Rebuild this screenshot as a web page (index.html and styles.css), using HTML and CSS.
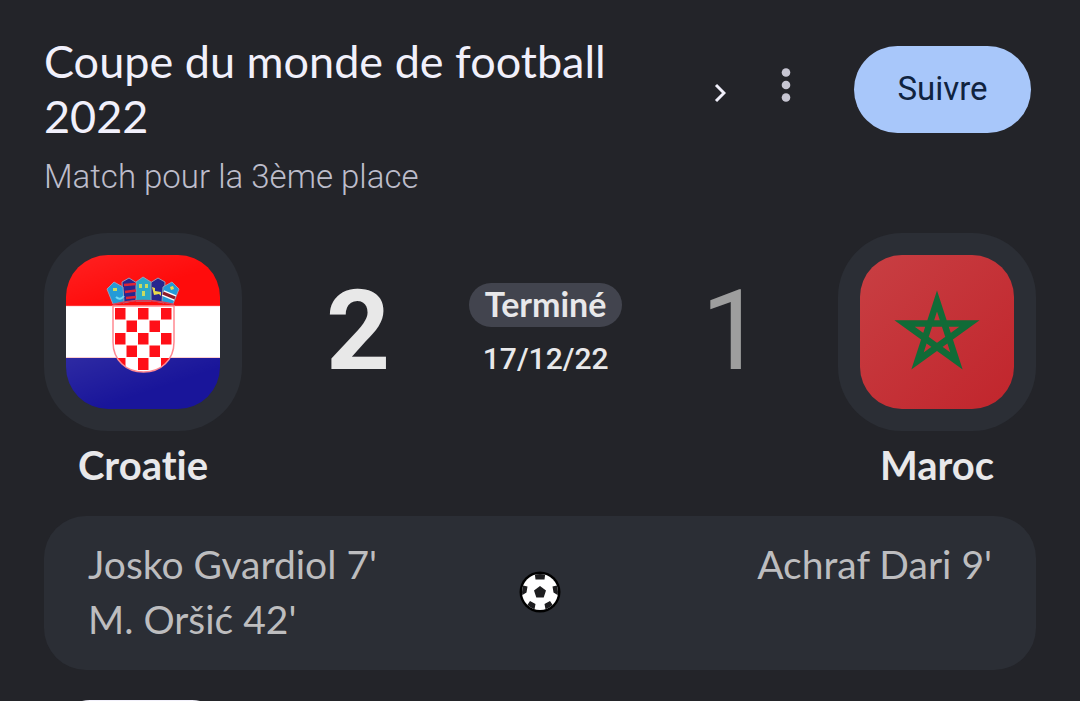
FILE: index.html
```html
<!DOCTYPE html>
<html lang="fr">
<head>
<meta charset="utf-8">
<meta name="viewport" content="width=device-width, initial-scale=1">
<title>Croatie – Maroc</title>
<link rel="stylesheet" href="styles.css">
</head>
<body>
<main class="match">
  <header class="header">
    <a class="competition" href="#">
      <span class="heading">
        <span class="title">Coupe du monde de football 2022</span>
        <span class="subtitle">Match pour la 3ème place</span>
      </span>
      <svg class="chevron" viewBox="0 0 12 20" aria-hidden="true"><path d="M2 2l8 8-8 8" fill="none" stroke="#f1f0fb" stroke-width="3"/></svg>
    </a>
    <button class="more" type="button" aria-label="Plus d'options">
      <svg class="dots" viewBox="0 0 10 34" aria-hidden="true"><g fill="#c7c6d2"><circle cx="5" cy="4.500" r="4.300"/><circle cx="5" cy="17" r="4.300"/><circle cx="5" cy="29.500" r="4.300"/></g></svg>
    </button>
    <button class="follow" type="button">Suivre</button>
  </header>

  <section class="scoreboard">
    <div class="team">
      <div class="badge">
        <svg class="flag" viewBox="0 0 154 154" role="img" aria-label="Drapeau de la Croatie">
          <defs>
            <linearGradient id="shine" x1="0" y1="0" x2="1" y2="1"><stop offset="0" stop-color="#fff" stop-opacity=".09"/><stop offset=".6" stop-color="#fff" stop-opacity="0"/></linearGradient>
          </defs>
          <rect width="154" height="52" fill="#ff0c0c"/>
          <rect y="51" width="154" height="52" fill="#fff"/>
          <rect y="103" width="154" height="51" fill="#19159a"/>
          <rect width="154" height="51" fill="url(#shine)"/>
          <rect y="103" width="154" height="51" fill="url(#shine)"/>
          <path d="M0 51h154M0 102.500h154" stroke="#ff9ba0" stroke-opacity=".5"/>
          <clipPath id="shield"><path d="M47 51h61v36c0 18-13 30-30.500 30S47 105 47 87z"/></clipPath>
          <g clip-path="url(#shield)">
            <rect x="47" y="51" width="61" height="66" fill="#fff"/>
            <path d="M49 53h10.500v11.500H49zM72 53h10.500v11.500H72zM95 53h10.500v11.500H95zM60.500 65.500H71V77H60.500zM83.500 65.500H94V77H83.500zM49 78h10.500v11.500H49zM72 78h10.500v11.500H72zM95 78h10.500v11.500H95zM60.500 90.500H71V102H60.500zM83.500 90.500H94V102H83.500zM49 103h10.500v12H49zM72 103h10.500v12H72zM95 103h10.500v12H95z" fill="#ff1018"/>
          </g>
          <path d="M47 51h61v36c0 18-13 30-30.500 30S47 105 47 87z" fill="none" stroke="#ff8890" stroke-width="1.500"/>
          <g stroke="#9a9bb5" stroke-width="1" stroke-linejoin="round">
            <path d="M56 27l7-4 8 5v17l-14 3z" fill="#28268e"/>
            <path d="M99 27l-7-4-8 5v17l14 3z" fill="#28268e"/>
            <path d="M41 34l7-7 9 5 1 15-11 2z" fill="#249bd7"/>
            <path d="M113 34l-7-7-9 5-1 15 11 2z" fill="#249bd7"/>
            <path d="M70 27l7-5 8 5v19H70z" fill="#2ba8c8"/>
          </g>
          <path d="M58 30l12-1M59 37l11-1.500M60 43l10-1" stroke="#df2536" stroke-width="2.500"/>
          <path d="M73 29h3v4h-3zM79 29h3v4h-3zM76 36h3v5h-3zM47 33h4v3h-4z" fill="#c6db61"/>
          <path d="M104 32l3-1 1 3-3 1zM86 32l3 1v3l6 1v4l-2-2-5 1-1-4z" fill="#eadb4b"/>
          <path d="M50 42q4 4 8-1" fill="none" stroke="#72d9f4" stroke-width="2"/>
          <path d="M97 38l12 5" stroke="#fff" stroke-width="6"/><path d="M97 38l12 5" stroke="#8e1d2b" stroke-width="3"/>
          <path d="M47 49.500q30-8 61 0" fill="none" stroke="#d83b55" stroke-width="1.500"/>
        </svg>
      </div>
      <h2 class="name">Croatie</h2>
    </div>

    <div class="result">
      <span class="score winner">2</span>
      <div class="status"><span class="state">Terminé</span><time class="date" datetime="2022-12-17">17/12/22</time></div>
      <span class="score">1</span>
    </div>

    <div class="team">
      <div class="badge">
        <svg class="flag" viewBox="0 0 154 154" role="img" aria-label="Drapeau du Maroc">
          <defs><linearGradient id="red" x1="0" y1="0" x2="1" y2="1"><stop offset="0" stop-color="#c83f43"/><stop offset="1" stop-color="#c1252c"/></linearGradient></defs>
          <rect width="154" height="154" fill="url(#red)"/>
          <path d="M77 46L96.500 106 44.500 68.500h65L57.500 106z" fill="none" stroke="#116b37" stroke-width="6.500" stroke-miterlimit="10"/>
        </svg>
      </div>
      <h2 class="name">Maroc</h2>
    </div>
  </section>

  <section class="goals" aria-label="Buts">
    <ul class="scorers"><li>Josko Gvardiol 7'</li><li>M. Oršić 42'</li></ul>
    <svg class="ball" viewBox="0 0 42 42" aria-hidden="true">
      <defs><clipPath id="disc"><circle cx="21" cy="21" r="18"/></clipPath></defs>
      <circle cx="21" cy="21" r="20.500" fill="#000"/>
      <circle cx="21" cy="21" r="18" fill="#fff"/>
      <g clip-path="url(#disc)" fill="#1d1d1f">
        <path d="M21 15l6 4.500-2.300 7h-7.400L15 19.500z"/>
        <path d="M15.500 1h11l-1 7.500h-9zM2 14l6.500 1.500-1 6L2 25zM40 14l-6.500 1.500 1 6L40 25zM7 36l4-6 5.500 3L15 41zM35 36l-4-6-5.500 3L27 41z"/>
      </g>
    </svg>
    <ul class="scorers away"><li>Achraf Dari 9'</li></ul>
  </section>

  <div class="tabs"><span class="tab"></span></div>
</main>
</body>
</html>
```

FILE: styles.css
```css
* { box-sizing: border-box; }

body {
  margin: 0;
  background: #232429;
  color: #e8e8ea;
  font-family: Lato, sans-serif;
  font-variant-ligatures: none;
}

.match { height: 100vh; padding: 34px 44px 0; overflow: hidden; }

.header { display: flex; align-items: flex-start; }

.competition {
  flex: 1;
  display: flex;
  align-items: flex-start;
  justify-content: space-between;
  color: #f1f0fb;
  text-decoration: none;
}

.heading { display: flex; flex-direction: column; max-width: 600px; }
.title { font-size: 45px; line-height: 55px; }
.subtitle {
  margin-top: 13px;
  color: #bdbdcb;
  font: 300 33px/40px Roboto, sans-serif;
}

.chevron { flex: none; width: 12px; height: 20px; margin-top: 49px; }

.more {
  display: flex;
  justify-content: center;
  width: 56px;
  margin: 34px 40px 0 32px;
  padding: 0;
  border: 0;
  background: none;
}
.dots { width: 10px; height: 34px; }

.follow {
  width: 177px;
  height: 87px;
  margin: 12px 5px 0 0;
  padding: 0 0 2px;
  border: 0;
  border-radius: 44px;
  background: #a8c7fa;
  color: #10233f;
  font: 400 33px/40px Roboto, sans-serif;
}

.scoreboard { display: flex; margin-top: 36px; }

.team { display: flex; flex-direction: column; align-items: center; width: 198px; }
.badge { padding: 22px; border-radius: 64px; background: #2b2e35; }
.flag { display: block; width: 154px; height: 154px; border-radius: 42px; }
.name { margin: 9px 0 0; font-size: 40px; font-weight: 700; line-height: 50px; }

.result {
  flex: 1;
  display: flex;
  align-items: center;
  justify-content: space-between;
  height: 198px;
  padding: 0 74px 3px 84px;
}
.score { color: #9e9e9e; font: 400 112px/120px Roboto, sans-serif; }
.winner { color: #e8e8e8; font-weight: 700; }
.status { display: flex; flex-direction: column; align-items: center; gap: 12px; font-size: 34px; font-weight: 700; }
.state { padding: 0 16px 2px; border-radius: 22px; background: #42444e; line-height: 42px; }
.date { font: 500 30px/40px Roboto, sans-serif; }

.goals {
  display: grid;
  grid-template-columns: 1fr 42px 1fr;
  align-items: center;
  margin-top: 26px;
  padding: 21px 44px 23px;
  border-radius: 42px;
  background: #2b2e35;
  color: #bdbdbf;
  font-size: 39px;
  line-height: 55px;
}
.scorers { align-self: start; margin: 0; padding: 0; list-style: none; white-space: nowrap; }
.away { text-align: right; }
.ball { width: 42px; height: 42px; }

.tabs { display: flex; margin-top: 30px; padding-left: 14px; }
.tab { width: 166px; height: 80px; border-radius: 32px; background: #f1f0fb; }
```
